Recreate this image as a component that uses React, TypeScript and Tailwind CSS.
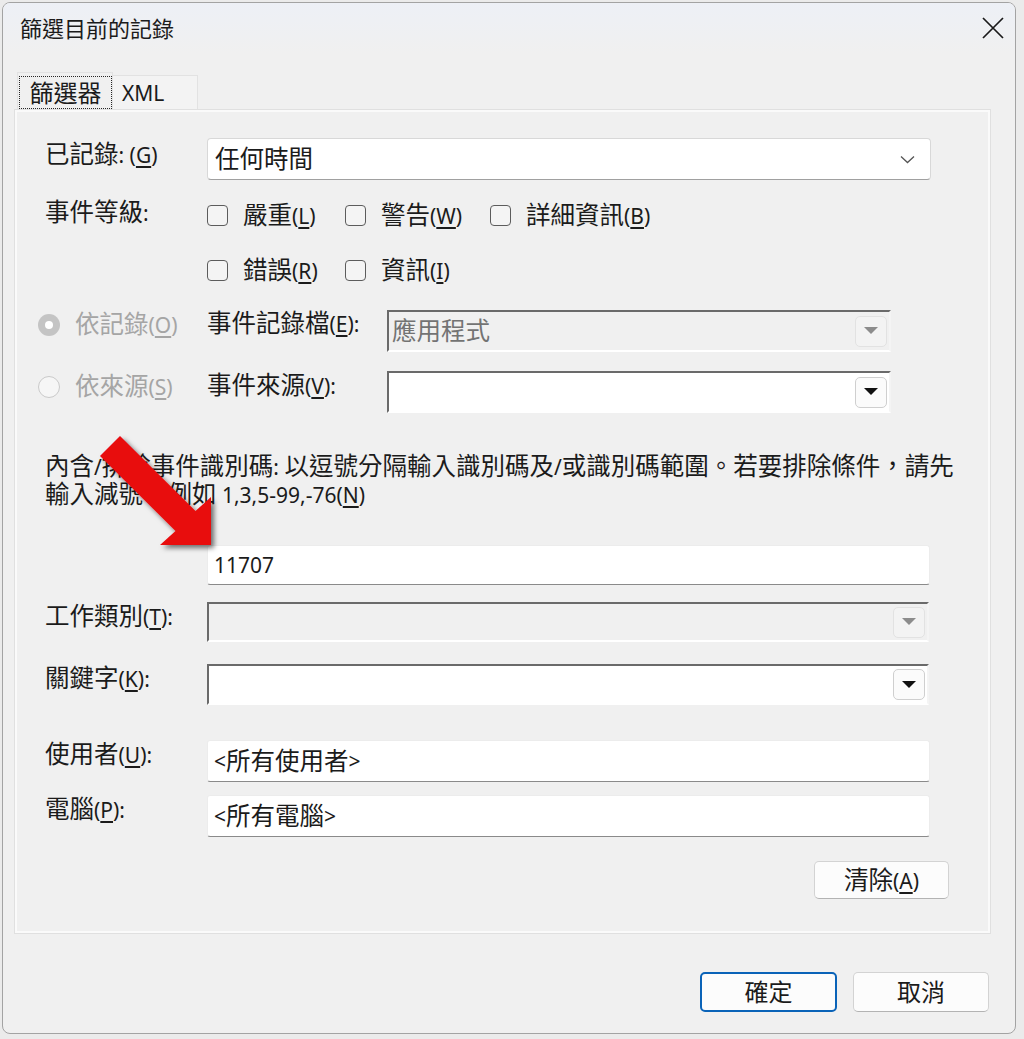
import type { ReactNode } from 'react';

const CJK_RE = /([\u2e80-\u9fff\u3000-\u303f\uff00-\uffef]+)/;

// CJK runs a bit larger than the latin runs, like JhengHei UI does
function Txt({ s }: { s: string }) {
  return (
    <>
      {s.split(CJK_RE).map((part, i) =>
        part === '' ? null : i % 2 === 1 ? (
          <span key={i} className="text-[24.5px]">
            {part}
          </span>
        ) : (
          <span key={i}>{part}</span>
        )
      )}
    </>
  );
}

function Acc({ t, k, end = '' }: { t: string; k: string; end?: string }) {
  return (
    <span className="whitespace-nowrap">
      <Txt s={t} />
      <span>
        (<u className="underline-offset-[3px]">{k}</u>){end}
      </span>
    </span>
  );
}

function Check({ t, k, className }: { t: string; k: string; className: string }) {
  return (
    <div className={`flex h-[25px] items-center gap-[15px] ${className}`}>
      <span className="h-[21px] w-[21px] shrink-0 rounded-[4px] border-[1.5px] border-[#5c5c5c] bg-[#f4f4f4]" />
      <Acc t={t} k={k} />
    </div>
  );
}

function Radio({ checked }: { checked?: boolean }) {
  return checked ? (
    <span className="flex h-[22px] w-[22px] shrink-0 items-center justify-center rounded-full bg-[#c4c4c4]">
      <span className="h-[8px] w-[8px] rounded-full bg-white" />
    </span>
  ) : (
    <span className="h-[22px] w-[22px] shrink-0 rounded-full border-[1.5px] border-[#cacaca] bg-[#f6f6f6]" />
  );
}

function Triangle({ color }: { color: string }) {
  return (
    <svg width="14" height="8" viewBox="0 0 14 8">
      <polygon points="0,0 14,0 7,7" fill={color} />
    </svg>
  );
}

function ClassicCombo({ disabled, text, className }: { disabled?: boolean; text?: string; className: string }) {
  return (
    <div
      className={`flex shrink-0 items-center justify-between border-2 border-t-[#6a6a6a] border-l-[#6a6a6a] border-r-[#f4f4f4] border-b-white pl-[3px] pr-[2px] ${
        disabled ? 'bg-[#f0f0f0] text-[#737373]' : 'bg-white'
      } ${className}`}
    >
      <span>{text ? <Txt s={text} /> : null}</span>
      <span
        className={`flex h-[31px] w-[32px] items-center justify-center rounded-[5px] border ${
          disabled ? 'border-[#e2e2e2] bg-[#f3f3f3]' : 'border-[#cfcfcf] bg-[#fbfbfb]'
        }`}
      >
        <Triangle color={disabled ? '#8c8c8c' : '#111'} />
      </span>
    </div>
  );
}

function TextBox({ children, className }: { children?: ReactNode; className: string }) {
  return (
    <div
      className={`flex shrink-0 items-center rounded-[3px] border border-[#ececec] border-b-[#8a8a8a] bg-white pl-[6px] ${className}`}
    >
      {children}
    </div>
  );
}

function Btn({ children, primary, className }: { children: ReactNode; primary?: boolean; className: string }) {
  return (
    <button
      className={`flex items-center justify-center rounded-[5px] bg-[#fcfcfc] ${
        primary ? 'border-2 border-[#0a63b8]' : 'border border-[#d3d3d3] border-b-[#b3b3b3]'
      } ${className}`}
    >
      {children}
    </button>
  );
}

export default function App() {
  return (
    <div className="relative h-[1039px] w-[1024px] overflow-hidden bg-[#ebebeb] font-['Noto_Sans','Noto_Sans_CJK_TC',sans-serif] text-[21px] leading-[24px] text-[#1b1b1b]">
      <div className="ml-[2px] mt-[2px] flex h-[1032px] w-[1014px] flex-col overflow-hidden rounded-[8px] border border-[#a3a3a3] bg-[#f0f0f0]">
        {/* title bar */}
        <div className="flex h-[50px] shrink-0 items-center justify-between bg-linear-to-b from-[#edf0f6] to-[#f0f0f0] pl-[17px] pr-[10px]">
          <span className="text-[22px]">篩選目前的記錄</span>
          <svg width="22" height="22" viewBox="0 0 22 22" className="mr-[1px]">
            <path d="M1 1 L21 21 M21 1 L1 21" stroke="#1a1a1a" strokeWidth="1.7" />
          </svg>
        </div>

        {/* tabs */}
        <div className="ml-[14px] mt-[19px] flex h-[38px] shrink-0 items-end">
          <div className="h-[38px] w-[96px] border border-b-0 border-[#e2e2e2] bg-[#f0f0f0] pb-[1px] pl-[1px] pr-[0px] pt-[3px]">
            <div className="flex h-full w-full items-center justify-center border border-dotted border-[#262626] text-[24px]">
              篩選器
            </div>
          </div>
          <div className="flex h-[35px] w-[85px] items-center border border-b-0 border-l-0 border-[#e2e2e2] bg-[#f3f3f3] pl-[9px] text-[21px]">
            XML
          </div>
        </div>

        {/* filter panel */}
        <div className="ml-[12px] h-[823px] w-[975px] shrink-0 border-2 border-[#fafafa] pl-[28px] pt-[26px] shadow-[0_0_0_1px_#e0e0e0]">
          <div className="flex h-[42px] items-start">
            <div className="w-[162px] pt-[4px]">
              <Acc t="已記錄: " k="G" />
            </div>
            <div className="flex h-[42px] w-[724px] items-center justify-between rounded-[4px] border border-[#d8d8d8] border-b-[#a0a0a0] bg-white pl-[7px] pr-[15px]">
              <Txt s="任何時間" />
              <svg width="15" height="9" viewBox="0 0 15 9">
                <polyline points="1,1.5 7.5,7.5 14,1.5" fill="none" stroke="#555" strokeWidth="1.3" />
              </svg>
            </div>
          </div>

          <div className="mt-[20px] flex items-start">
            <div className="w-[162px]">
              <Txt s="事件等級:" />
            </div>
            <div className="flex flex-col gap-[30px] pt-[3px]">
              <div className="flex">
                <Check t="嚴重" k="L" className="w-[138px]" />
                <Check t="警告" k="W" className="w-[145px]" />
                <Check t="詳細資訊" k="B" className="w-[170px]" />
              </div>
              <div className="flex">
                <Check t="錯誤" k="R" className="w-[138px]" />
                <Check t="資訊" k="I" className="w-[145px]" />
              </div>
            </div>
          </div>

          <div className="-ml-[7px] mt-[27px] flex h-[42px] items-start">
            <div className="flex w-[169px] items-center gap-[15px] pt-[2px] text-[#a5a5a5]">
              <Radio checked />
              <Acc t="依記錄" k="O" />
            </div>
            <div className="w-[180px] pt-[1px]">
              <Acc t="事件記錄檔" k="E" end=":" />
            </div>
            <ClassicCombo disabled text="應用程式" className="h-[42px] w-[504px]" />
          </div>

          <div className="-ml-[7px] mt-[19px] flex h-[42px] items-start">
            <div className="flex w-[169px] items-center gap-[15px] pt-[3px] text-[#a5a5a5]">
              <Radio />
              <Acc t="依來源" k="S" />
            </div>
            <div className="w-[180px] pt-[2px]">
              <Acc t="事件來源" k="V" end=":" />
            </div>
            <ClassicCombo className="h-[42px] w-[504px]" />
          </div>

          <div className="mt-[39px] h-[56px] leading-[28px]">
            <div className="flex h-[28px] items-baseline whitespace-pre">
              <Txt s="內含/排除事件識別碼: 以逗號分隔輸入識別碼及/或識別碼範圍。若要排除條件，請先" />
            </div>
            <div className="flex h-[28px] items-baseline whitespace-pre">
              <Txt s="輸入減號。例如 1,3,5-99,-76" />
              <span>
                (<u className="underline-offset-[3px]">N</u>)
              </span>
            </div>
          </div>

          <div className="ml-[162px] mt-[37px]">
            <TextBox className="h-[40px] w-[723px]">11707</TextBox>
          </div>

          <div className="mt-[17px] flex items-start">
            <div className="w-[162px] pt-[2px]">
              <Acc t="工作類別" k="T" end=":" />
            </div>
            <ClassicCombo disabled className="h-[40px] w-[722px]" />
          </div>

          <div className="mt-[22px] flex items-start">
            <div className="w-[162px] pt-[2px]">
              <Acc t="關鍵字" k="K" end=":" />
            </div>
            <ClassicCombo className="h-[41px] w-[722px]" />
          </div>

          <div className="mt-[35px] flex items-start">
            <div className="w-[162px] pt-[2px]">
              <Acc t="使用者" k="U" end=":" />
            </div>
            <TextBox className="h-[42px] w-[723px]">
              <Txt s="<所有使用者>" />
            </TextBox>
          </div>

          <div className="mt-[13px] flex items-start">
            <div className="w-[162px] pt-[2px]">
              <Acc t="電腦" k="P" end=":" />
            </div>
            <TextBox className="h-[42px] w-[723px]">
              <Txt s="<所有電腦>" />
            </TextBox>
          </div>

          <div className="ml-[769px] mt-[24px]">
            <Btn className="h-[38px] w-[135px]">
              <Acc t="清除" k="A" />
            </Btn>
          </div>
        </div>

        {/* dialog buttons */}
        <div className="mt-[39px] flex justify-end gap-[16px] pr-[26px]">
          <Btn primary className="h-[40px] w-[137px] text-[24px]">
            確定
          </Btn>
          <Btn className="h-[40px] w-[136px] text-[24px]">取消</Btn>
        </div>
      </div>

      {/* red annotation arrow */}
      <svg className="pointer-events-none absolute left-0 top-0" width="1024" height="1039" viewBox="0 0 1024 1039">
        <defs>
          <filter id="arrowShadow" x="-20%" y="-20%" width="150%" height="150%">
            <feDropShadow dx="3" dy="3" stdDeviation="2.5" floodColor="#000" floodOpacity="0.55" />
          </filter>
        </defs>
        <polygon
          points="120,436 195.5,511 211,497 211,545 160,545 175.5,531 100,456"
          fill="#e80a0f"
          filter="url(#arrowShadow)"
        />
      </svg>
    </div>
  );
}
